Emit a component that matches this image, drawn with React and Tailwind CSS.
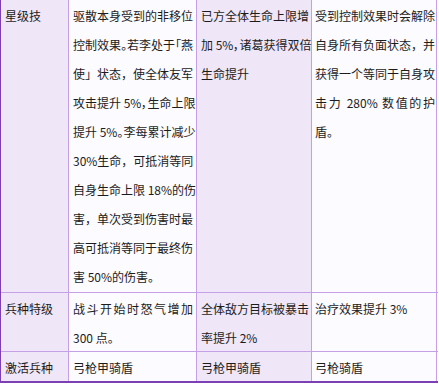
import React from "react";

const J = "whitespace-nowrap [text-align-last:justify] text-justify";
const L = "whitespace-nowrap text-left";

function Lines({ lines }) {
  return (
    <>
      {lines.map((item, i) => {
        const t = typeof item === "string" ? item : item.t;
        const p = typeof item === "string" ? false : item.p;
        return (
          <div
            key={i}
            className={`${i < lines.length - 1 ? J : L} ${p ? "[font-feature-settings:'palt']" : ""}`}
          >
            {t}
          </div>
        );
      })}
    </>
  );
}

const lav = "bg-[#efe6f7]";
const wht = "bg-[#fcfbff]";
const bd = "border-r border-r-[#c6a0e6]";

function Row({ h, cells, last }) {
  return (
    <div className={`flex ${h} ${last ? "" : "border-b border-b-[#c6a0e6]"}`}>
      <div className={`w-[68px] shrink-0 ${lav} ${bd} pl-[4px] pt-px`}>
        <Lines lines={cells[0]} />
      </div>
      <div className={`w-[128px] shrink-0 ${wht} ${bd} pl-[4px] pr-[3px] pt-px`}>
        <Lines lines={cells[1]} />
      </div>
      <div className={`w-[115px] shrink-0 ${lav} ${bd} pl-[4px] pr-[2px] pt-px`}>
        <Lines lines={cells[2]} />
      </div>
      <div className={`w-[125px] shrink-0 ${wht} ${bd} pl-[3px] pr-[1px] pt-px`}>
        <Lines lines={cells[3]} />
      </div>
    </div>
  );
}

export default function App() {
  return (
    <div className="w-[439px] h-[384px] bg-white overflow-hidden">
      <div
        className="w-[438px] border-l border-l-[#7c3fb4] border-b-2 border-b-[#7c3fb4] text-[12px] leading-[29px] text-[#1c1c1c]"
        style={{ fontFamily: '"Noto Sans CJK SC", "Noto Sans", sans-serif' }}
      >
        <Row
          h="h-[293px] box-border"
          cells={[
            ["星级技"],
            [
              "驱散本身受到的非移位",
              { t: "控制效果。若李处于「燕", p: true },
              "使」状态，使全体友军",
              { t: "攻击提升 5%，生命上限", p: true },
              { t: "提升 5%。李每累计减少", p: true },
              "30%生命，可抵消等同",
              "自身生命上限 18%的伤",
              "害，单次受到伤害时最",
              "高可抵消等同于最终伤",
              "害 50%的伤害。",
            ],
            ["已方全体生命上限增", { t: "加 5%，诸葛获得双倍", p: true }, "生命提升"],
            [
              "受到控制效果时会解除",
              "自身所有负面状态，并",
              "获得一个等同于自身攻",
              "击力 280% 数值的护",
              "盾。",
            ],
          ]}
        />
        <Row
          h="h-[59px] box-border"
          cells={[
            ["兵种特级"],
            ["战斗开始时怒气增加", "300 点。"],
            ["全体敌方目标被暴击", "率提升 2%"],
            ["治疗效果提升 3%"],
          ]}
        />
        <Row
          h="h-[29px] box-border"
          last
          cells={[["激活兵种"], ["弓枪甲骑盾"], ["弓枪甲骑盾"], ["弓枪骑盾"]]}
        />
      </div>
    </div>
  );
}
